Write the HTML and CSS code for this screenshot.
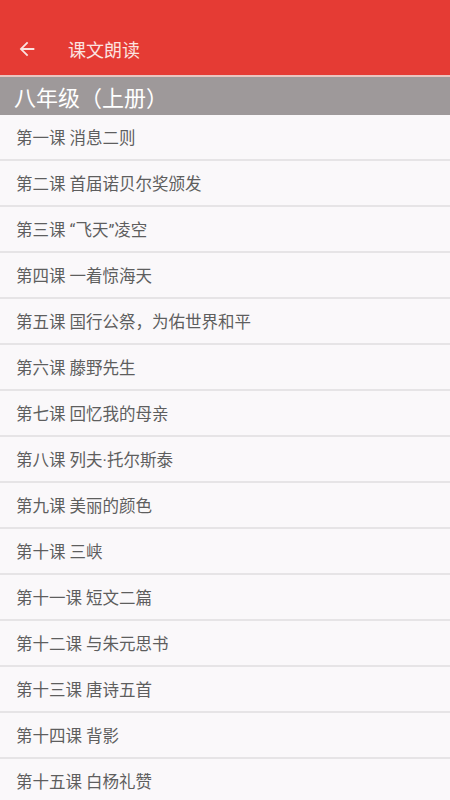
FILE: index.html
```html
<!DOCTYPE html>
<html lang="zh">
<head>
<meta charset="utf-8">
<link rel="stylesheet" href="styles.css">
</head>
<body>
<header class="appbar">
  <svg class="back" width="22" height="22" viewBox="0 0 24 24"><path d="M20 11H7.83l5.59-5.59L12 4l-8 8 8 8 1.41-1.41L7.83 13H20v-2z" fill="#fbe3e0"/></svg>
  <span class="title">课文朗读</span>
</header>
<div class="divider"></div>
<div class="section">八年级（上册）</div>
<ul class="list">
  <li>第一课 消息二则</li>
  <li>第二课 首届诺贝尔奖颁发</li>
  <li>第三课 “飞天”凌空</li>
  <li>第四课 一着惊海天</li>
  <li>第五课 国行公祭，为佑世界和平</li>
  <li>第六课 藤野先生</li>
  <li>第七课 回忆我的母亲</li>
  <li>第八课 列夫·托尔斯泰</li>
  <li>第九课 美丽的颜色</li>
  <li>第十课 三峡</li>
  <li>第十一课 短文二篇</li>
  <li>第十二课 与朱元思书</li>
  <li>第十三课 唐诗五首</li>
  <li>第十四课 背影</li>
  <li>第十五课 白杨礼赞</li>
</ul>
</body>
</html>
```
FILE: styles.css
```css
html, body {
  margin: 0;
  padding: 0;
}
body {
  width: 450px;
  height: 800px;
  overflow: hidden;
  background: #faf8fa;
  font-family: Roboto, "Noto Sans CJK SC", sans-serif;
}
.appbar {
  height: 75px;
  background: #e53b34;
  display: flex;
  align-items: center;
  padding: 22px 0 0 16px;
  box-sizing: border-box;
  color: #fff;
}
.back {
  display: block;
}
.title {
  margin-left: 30px;
  font-size: 18px;
  line-height: 24px;
  color: #fbe3e0;
  font-family: "Noto Sans CJK SC", sans-serif;
}
.divider {
  height: 2px;
  background: #e9c5c0;
}
.section {
  height: 38px;
  background: #9e999a;
  color: #fff;
  font-size: 22px;
  line-height: 38px;
  padding-left: 14px;
  font-family: "Noto Sans CJK SC", sans-serif;
}
.list {
  list-style: none;
  margin: 0;
  padding: 0;
}
.list li {
  height: 41px;
  line-height: 41px;
  padding: 3px 0 0 16px;
  font-size: 16.5px;
  color: #5e5e5e;
  border-bottom: 2px solid #e6e4e6;
  font-family: Roboto, "Noto Sans CJK SC", sans-serif;
}
```
